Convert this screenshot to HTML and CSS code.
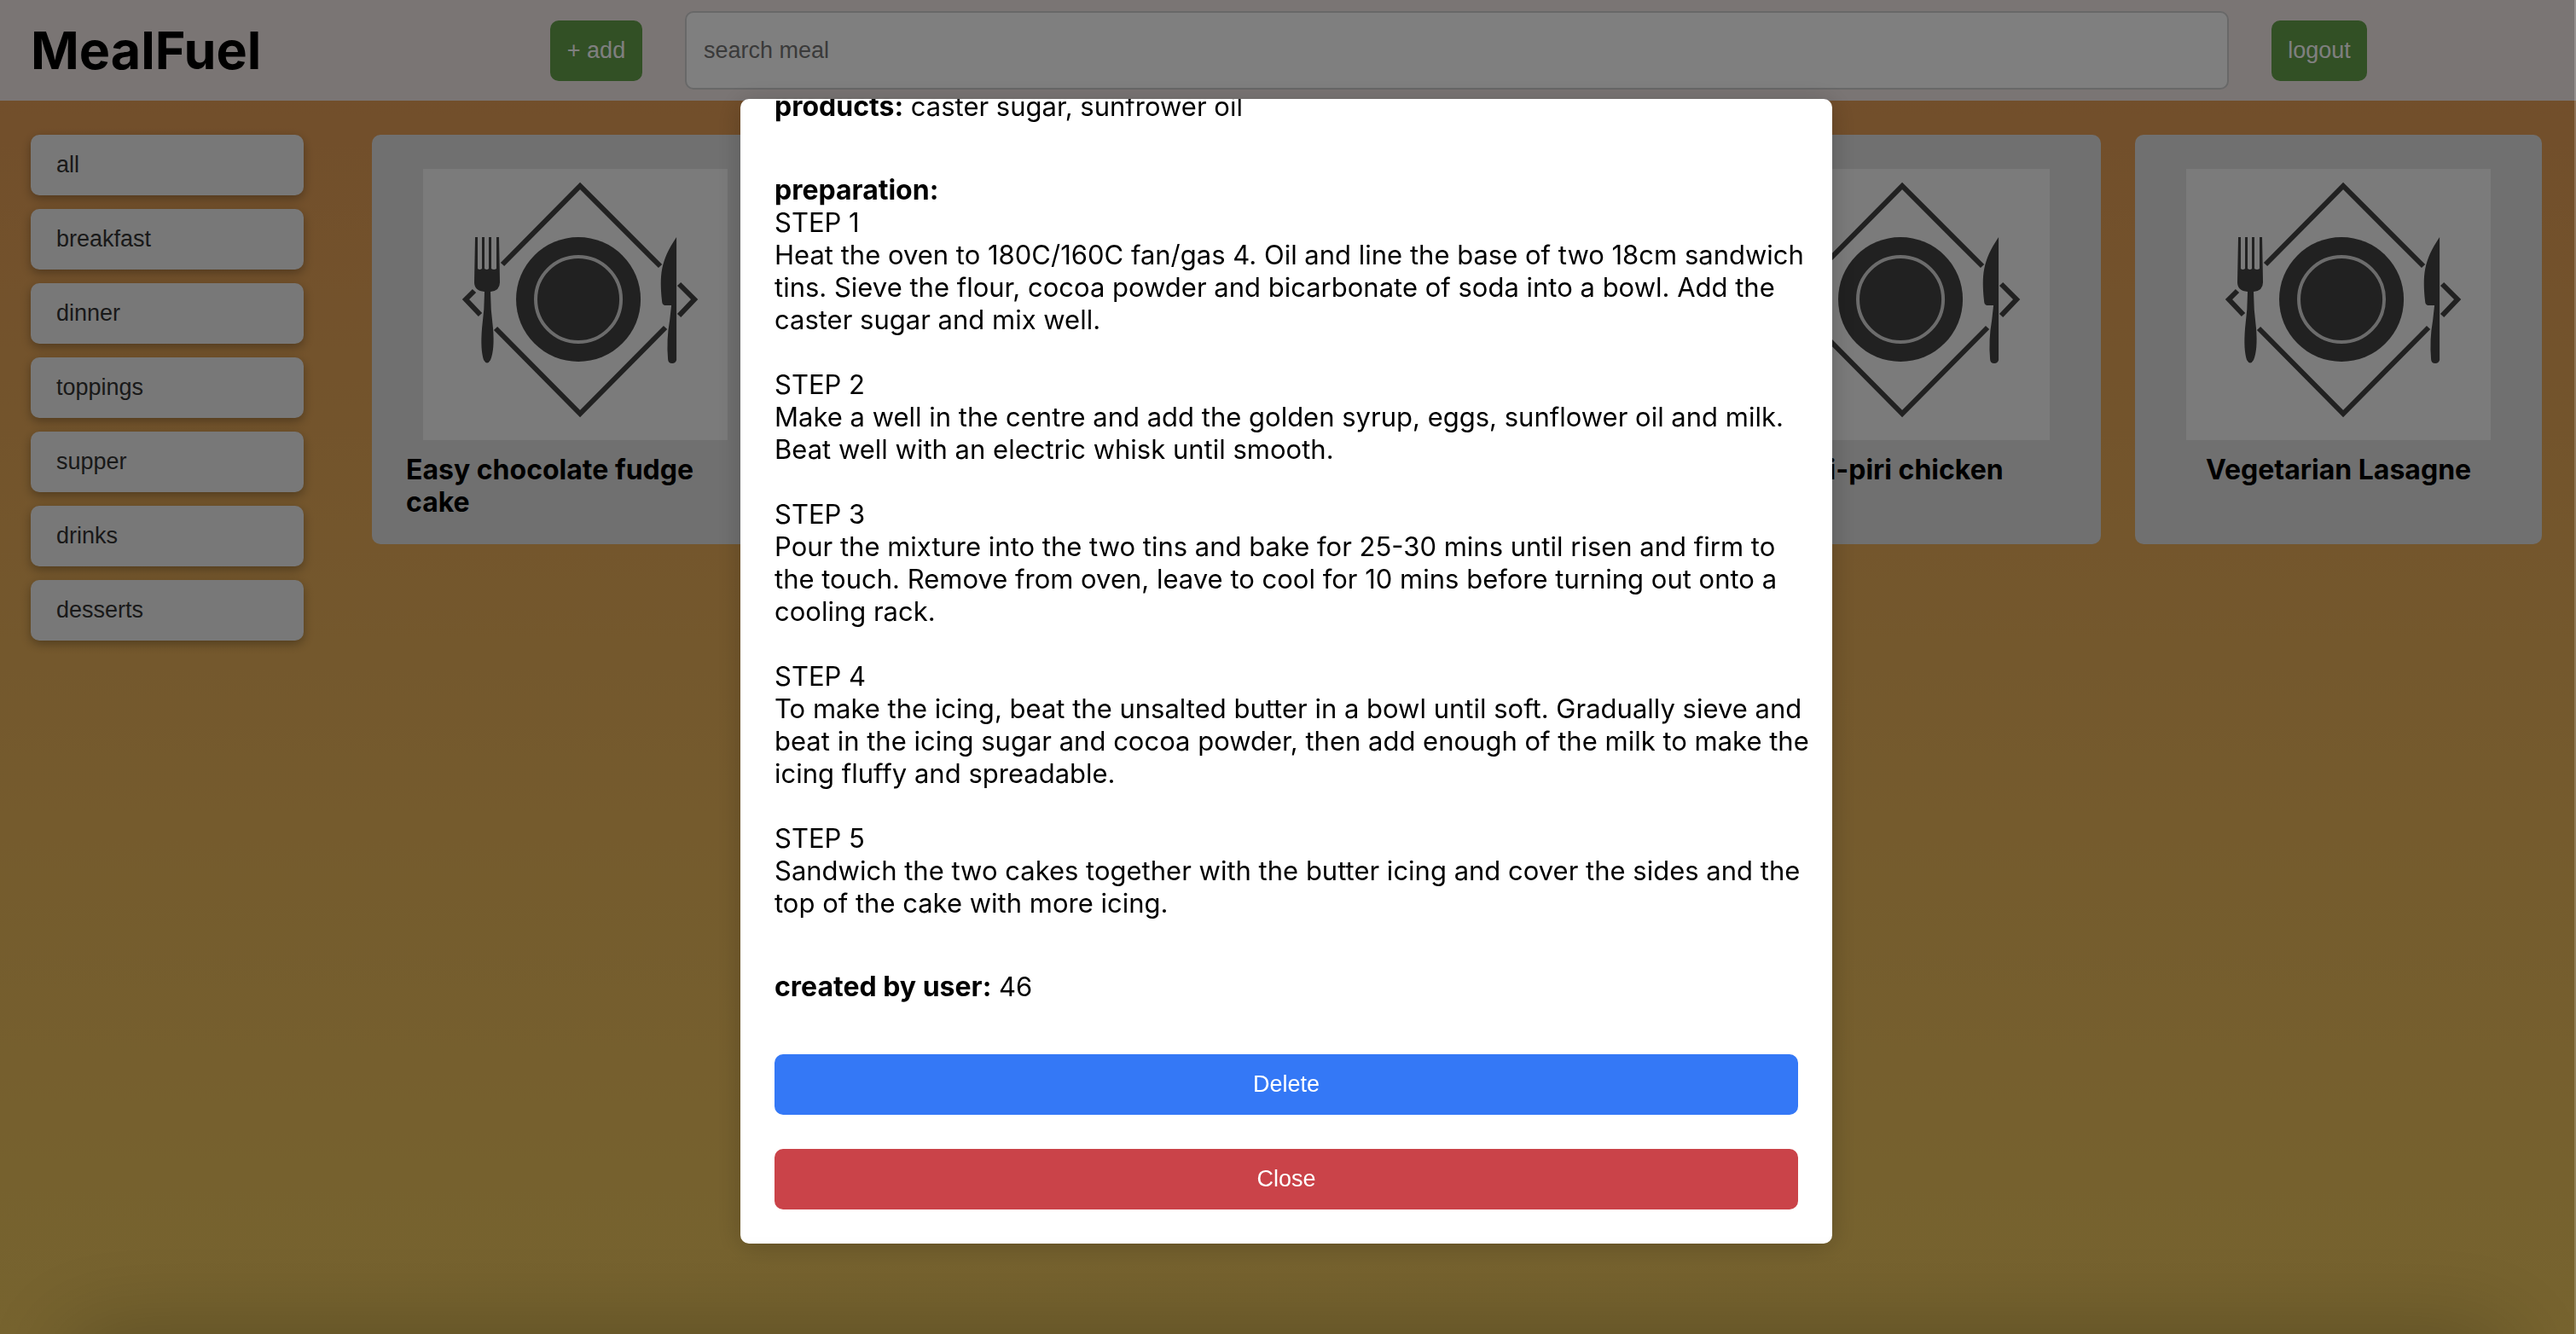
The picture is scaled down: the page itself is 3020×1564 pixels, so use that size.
FILE: index.html
```html
<!DOCTYPE html>
<html lang="en">
<head>
<meta charset="utf-8">
<title>MealFuel</title>
<link rel="stylesheet" href="styles.css">
</head>
<body>
<svg class="symbols" aria-hidden="true">
  <symbol id="plate" viewBox="0 0 357 318" preserveAspectRatio="none">
    <rect width="357" height="318" fill="#f7f7f7"/>
    <g fill="none" stroke="#424242" stroke-width="6">
      <path d="M93 112 184 20 278 114"/>
      <path d="M85 187 184 287 284 186"/>
      <path d="M60 143 50 153 67 171"/>
      <path d="M300 135 318 153 300 172"/>
    </g>
    <circle cx="182" cy="153" r="73" fill="#424242"/>
    <circle cx="182" cy="153" r="50" fill="none" stroke="#d8d8d8" stroke-width="4"/>
    <g fill="#424242">
      <path d="M61 80H64V117Q66 119 69 117V80H72V117Q75 119 77 117V80H80V117Q83 119 86 117V80H89L90 133Q90 143 79 144Q79 165 82 187Q84 212 79 224Q75 231 71 224Q67 212 69 187Q72 165 72 144Q60 143 60 133Z"/>
      <path d="M297 80V224Q296 228 292 228Q287 228 287 223Q285 200 289 178L291 160H283Q280 159 280 155C277 125 278 108 297 80Z"/>
    </g>
  </symbol>
</svg>
<div class="page" inert>
  <header class="header">
    <h1 class="logo">MealFuel</h1>
    <button class="button">+ add</button>
    <input class="search" type="search" placeholder="search meal" aria-label="search meal">
    <button class="button">logout</button>
  </header>
  <div class="content">
    <nav class="categories" aria-label="Meal categories">
      <button class="category">all</button>
      <button class="category">breakfast</button>
      <button class="category">dinner</button>
      <button class="category">toppings</button>
      <button class="category">supper</button>
      <button class="category">drinks</button>
      <button class="category">desserts</button>
    </nav>
    <main class="meals">
      <article class="meal"><svg class="meal-picture" aria-hidden="true"><use href="#plate"/></svg><h2 class="meal-title">Easy chocolate fudge cake</h2></article>
      <article class="meal"><svg class="meal-picture" aria-hidden="true"><use href="#plate"/></svg></article>
      <article class="meal"><svg class="meal-picture" aria-hidden="true"><use href="#plate"/></svg></article>
      <article class="meal"><svg class="meal-picture" aria-hidden="true"><use href="#plate"/></svg><h2 class="meal-title">Piri-piri chicken</h2></article>
      <article class="meal"><svg class="meal-picture" aria-hidden="true"><use href="#plate"/></svg><h2 class="meal-title">Vegetarian Lasagne</h2></article>
    </main>
  </div>
</div>
<div class="overlay">
  <section class="modal" role="dialog" aria-modal="true" aria-label="Easy chocolate fudge cake">
    <p class="detail"><strong>products:</strong> caster sugar, sunfrower oil</p>
    <div class="detail">
      <strong>preparation:</strong>
      <p class="step">STEP 1<br>Heat the oven to 180C/160C fan/gas 4. Oil and line the base of two 18cm sandwich tins. Sieve the flour, cocoa powder and bicarbonate of soda into a bowl. Add the caster sugar and mix well.</p>
      <p class="step">STEP 2<br>Make a well in the centre and add the golden syrup, eggs, sunflower oil and milk. Beat well with an electric whisk until smooth.</p>
      <p class="step">STEP 3<br>Pour the mixture into the two tins and bake for 25-30 mins until risen and firm to the touch. Remove from oven, leave to cool for 10 mins before turning out onto a cooling rack.</p>
      <p class="step">STEP 4<br>To make the icing, beat the unsalted butter in a bowl until soft. Gradually sieve and beat in the icing sugar and cocoa powder, then add enough of the milk to make the icing fluffy and spreadable.</p>
      <p class="step">STEP 5<br>Sandwich the two cakes together with the butter icing and cover the sides and the top of the cake with more icing.</p>
    </div>
    <p class="detail"><strong>created by user:</strong> 46</p>
    <div class="actions">
      <button class="action action-delete">Delete</button>
      <button class="action action-close">Close</button>
    </div>
  </section>
</div>
</body>
</html>
```
FILE: styles.css
```css
* { box-sizing: border-box; }

body {
  margin: 0;
  font: 31px/38px Inter, "Liberation Sans", sans-serif;
  color: #000;
}

h1, h2, p { margin: 0; }

strong { font-size: 32px; }

button, input {
  font: 27px/31px "Liberation Sans", Arial, sans-serif;
  border: 0;
  border-radius: 10px;
}

.symbols { display: none; }

.page {
  min-height: 100vh;
  background: linear-gradient(#e49a56, #eec85e);
}

.header {
  display: grid;
  grid-template-columns: 609px 108px 1fr 112px 209px;
  align-items: center;
  height: 118px;
  padding: 0 36px;
  background: #f5ebe9;
}

.logo { font-size: 61px; line-height: 76px; }

.button {
  height: 71px;
  padding: 0;
  background: #64a04a;
  color: #fff;
}

.search {
  height: 92px;
  margin: 0 50px;
  padding: 0 20px;
  border: 2px solid #d0d0d0;
  background: #fff;
}

.search::placeholder { color: #757575; }

.content {
  display: flex;
  gap: 80px;
  padding: 40px 40px 40px 36px;
}

.categories {
  display: flex;
  flex: none;
  flex-direction: column;
  gap: 16px;
  width: 320px;
}

.category {
  height: 71px;
  padding: 0 30px;
  background: #f0f0f0;
  box-shadow: 0 4px 12px rgba(0, 0, 0, .3);
  color: #333;
  text-align: left;
}

.meals {
  display: grid;
  flex: 1;
  grid-template-columns: repeat(5, 1fr);
  align-items: start;
  gap: 40px;
}

.meal {
  display: flex;
  flex-direction: column;
  align-items: center;
  gap: 16px;
  min-height: 480px;
  padding: 40px 40px 30px;
  border-radius: 10px;
  background: #e0e0e0;
}

.meal-picture { width: 90%; height: 318px; }

.meal-title { font-size: 32px; line-height: 38px; }

.overlay {
  position: fixed;
  inset: 0;
  display: flex;
  justify-content: center;
  padding: 116px 2px 106px 0;
  overflow: hidden;
  border-right: 2px solid rgba(255, 255, 255, .2);
  background: rgba(0, 0, 0, .5);
}

/* Soft shade rising from the lower edge of the window */
.overlay::after {
  content: "";
  position: absolute;
  top: 100%;
  left: 80px;
  right: 80px;
  height: 100px;
  box-shadow: 0 0 110px rgba(0, 0, 0, .25);
}

.modal {
  display: flex;
  flex-direction: column;
  justify-content: flex-end;
  gap: 60px;
  width: 1280px;
  padding: 40px;
  overflow: hidden;
  border-radius: 10px;
  background: #fff;
  box-shadow: 0 4px 30px rgba(0, 0, 0, .2);
}

.detail { margin-right: -20px; }

.step + .step { margin-top: 38px; }

.actions {
  display: flex;
  flex-direction: column;
  gap: 40px;
}

.action { height: 71px; color: #fff; }

.action-delete { background: #3478f6; }

.action-close { background: #ca4349; }
```
